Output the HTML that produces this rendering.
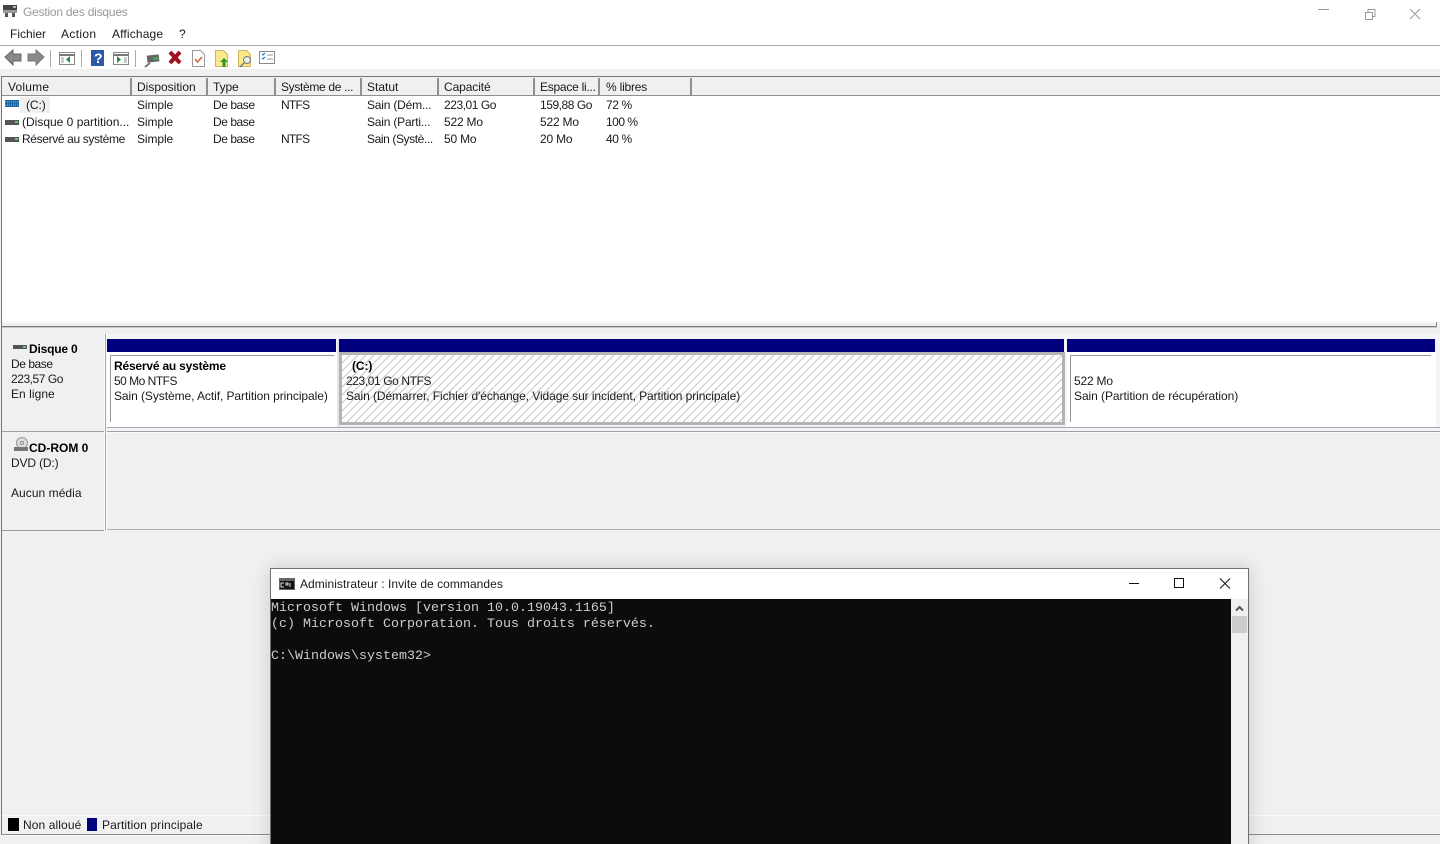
<!DOCTYPE html>
<html><head><meta charset="utf-8"><style>
html,body{margin:0;padding:0;width:1440px;height:844px;overflow:hidden;background:#f0f0f0}
#r{position:relative;width:1440px;height:844px;overflow:hidden;font:12px/16px "Liberation Sans",sans-serif;color:#1a1a1a}
#r div{position:absolute}
.t{white-space:nowrap;letter-spacing:-.1px}
.n{letter-spacing:-.45px}
.b{font-weight:bold;color:#000}
.h{top:78px;height:17px;background:#f0f0f0;border-right:2px solid #8f8f8f;box-sizing:border-box}
svg{position:absolute;overflow:visible}
.m{font-family:"Liberation Mono",monospace;font-size:13.33px;line-height:16px;color:#ccc;white-space:pre;left:271px}
</style></head><body><div id="r">
<div style="left:0;top:0;width:1440px;height:45px;background:#fff"></div>
<div style="left:0;top:45px;width:1440px;height:1px;background:#a8a8a8"></div>
<div style="left:0;top:46px;width:1440px;height:23px;background:#fff"></div>

<svg style="left:2px;top:4px" width="16" height="14"><rect x="1" y="1" width="14" height="5" fill="#444"/><rect x="11" y="2" width="3" height="2" fill="#9c9"/><path d="M1 6h14v3H1z" fill="#999"/><rect x="3" y="9" width="3" height="4" fill="#555"/><rect x="10" y="9" width="3" height="4" fill="#555"/></svg>
<div class="t" style="left:23px;top:4px;color:#999;letter-spacing:-.22px">Gestion des disques</div>
<svg style="left:1318px;top:9px" width="110" height="12" fill="none" stroke="#999"><path d="M0 .5h11M47.500 3.500h7v7h-7zM50 3V.5h7v7h-2.500M92 0l10 10M102 0l-10 10"/></svg>

<div class="t" style="left:10px;top:26px;letter-spacing:0">Fichier</div>
<div class="t" style="left:61px;top:26px;letter-spacing:.35px">Action</div>
<div class="t" style="left:112px;top:26px;letter-spacing:.15px">Affichage</div>
<div class="t" style="left:179px;top:26px">?</div>

<svg style="left:0;top:45px" width="290" height="24">
<path d="M5 12l8-7v4h8v7h-8v4z" fill="#8a8a8a" stroke="#666"/>
<path d="M44 12l-8-7v4h-8v7h8v4z" fill="#8a8a8a" stroke="#777"/>
<path d="M50.500 5v17M81.500 5v17M135.500 5v17" stroke="#aaa"/>
<rect x="59.500" y="7.500" width="15" height="12" fill="#fff" stroke="#888"/><path d="M60 10h14" stroke="#777" stroke-width="2"/><path d="M70 11v7l-4-3.500z" fill="#2a8a4a"/><path d="M61 13h3M61 15h3M61 17h3" stroke="#999"/>
<rect x="91" y="5" width="13" height="16" fill="#2c5aa8"/><text x="94" y="18" fill="#fff" font-size="14" font-weight="bold" font-family="Liberation Sans">?</text>
<rect x="113.500" y="7.500" width="15" height="12" fill="#fff" stroke="#888"/><path d="M114 10h14" stroke="#777" stroke-width="2"/><path d="M117 11v7l4-3.500z" fill="#2a8a4a"/><path d="M124 13h3M124 15h3M124 17h3" stroke="#999"/>
<path d="M145 22l5-4" stroke="#777" stroke-width="2"/><rect x="147" y="10" width="12" height="7" fill="#666" transform="rotate(-6 153 13)"/><rect x="153" y="12" width="5" height="3" fill="#4a4"/>
<path d="M170 7l10 11M180 7l-10 11" stroke="#a01020" stroke-width="4"/>
<path d="M192.500 5.500h8l4 4v12h-12z" fill="#fff" stroke="#999"/><path d="M195 14l2.500 3 4.500-5" stroke="#d06030" stroke-width="1.500" fill="none"/>
<path d="M215.500 5.500h8l4 4v12h-12z" fill="#fce98a" stroke="#c8b860"/><path d="M224 13l4 4h-2.500v5h-3v-5H220z" fill="#2a9a30"/>
<path d="M238.500 5.500h8l4 4v12h-12z" fill="#fce98a" stroke="#c8b860"/><circle cx="247" cy="15" r="3.500" fill="#e8eef0" stroke="#777"/><path d="M244 18l-4 4" stroke="#777" stroke-width="1.500"/>
<rect x="259.500" y="6.500" width="15" height="12" fill="#fff" stroke="#888"/><path d="M262 9l1 1 2-2M262 13l1 1 2-2" stroke="#2a6ab0" fill="none"/><path d="M267 10h6M267 14h6" stroke="#999"/>
</svg>

<!-- list box -->
<div style="left:1px;top:76px;width:1439px;height:1px;background:#777"></div>
<div style="left:2px;top:95px;width:1438px;height:226px;background:#fff"></div>
<div style="left:2px;top:94px;width:1438px;height:2px;background:#8f8f8f"></div>
<div style="left:1px;top:321px;width:1439px;height:2px;background:#f8f8f8"></div>
<div style="left:2px;top:326px;width:1435px;height:1px;background:#7a7a7a"></div>
<div style="left:2px;top:327px;width:1435px;height:1px;background:#c8c8c8"></div>
<div style="left:1436px;top:322px;width:1px;height:5px;background:#888"></div>

<div class="h" style="left:2px;width:130px"></div>
<div class="h" style="left:132px;width:76px"></div>
<div class="h" style="left:208px;width:68px"></div>
<div class="h" style="left:276px;width:86px"></div>
<div class="h" style="left:362px;width:77px"></div>
<div class="h" style="left:439px;width:96px"></div>
<div class="h" style="left:535px;width:65px"></div>
<div class="h" style="left:600px;width:92px"></div>
<div class="h" style="left:692px;width:748px;border:0"></div>

<div class="t" style="left:8px;top:79px;letter-spacing:.2px">Volume</div>
<div class="t" style="left:137px;top:79px;letter-spacing:0">Disposition</div>
<div class="t" style="left:213px;top:79px">Type</div>
<div class="t" style="left:281px;top:79px;letter-spacing:-.33px">Système de ...</div>
<div class="t" style="left:367px;top:79px;letter-spacing:0">Statut</div>
<div class="t" style="left:444px;top:79px;letter-spacing:-.1px">Capacité</div>
<div class="t" style="left:540px;top:79px;letter-spacing:-.25px">Espace li...</div>
<div class="t" style="left:606px;top:79px;letter-spacing:-.2px">% libres</div>

<div style="left:20px;top:97px;width:30px;height:16px;background:#f0f0f0"></div>
<svg style="left:5px;top:100px" width="14" height="8"><rect width="14" height="7" fill="#1f6aa8"/><path d="M0 2h14M0 5h14" stroke="#7cb0d8" stroke-dasharray="1 1"/></svg>
<svg style="left:5px;top:120px" width="14" height="5"><rect width="14" height="5" fill="#555"/><rect x="10" y="1" width="3" height="2" fill="#6c6"/></svg>
<svg style="left:5px;top:137px" width="14" height="5"><rect width="14" height="5" fill="#555"/><rect x="10" y="1" width="3" height="2" fill="#6c6"/></svg>

<div class="t" style="left:26px;top:97px">(C:)</div>
<div class="t" style="left:22px;top:114px;letter-spacing:0">(Disque 0 partition...</div>
<div class="t" style="left:22px;top:131px;letter-spacing:-.36px">Réservé au système</div>
<div class="t" style="left:137px;top:97px">Simple</div>
<div class="t" style="left:137px;top:114px">Simple</div>
<div class="t" style="left:137px;top:131px">Simple</div>
<div class="t n" style="left:213px;top:97px">De base</div>
<div class="t n" style="left:213px;top:114px">De base</div>
<div class="t n" style="left:213px;top:131px">De base</div>
<div class="t" style="left:281px;top:97px;letter-spacing:-.75px">NTFS</div>
<div class="t" style="left:281px;top:131px;letter-spacing:-.75px">NTFS</div>
<div class="t" style="left:367px;top:97px;letter-spacing:-.2px">Sain (Dém...</div>
<div class="t" style="left:367px;top:114px;letter-spacing:-.2px">Sain (Parti...</div>
<div class="t" style="left:367px;top:131px;letter-spacing:-.4px">Sain (Systè...</div>
<div class="t n" style="left:444px;top:97px">223,01 Go</div>
<div class="t" style="left:444px;top:114px;letter-spacing:-.2px">522 Mo</div>
<div class="t" style="left:444px;top:131px;letter-spacing:-.2px">50 Mo</div>
<div class="t n" style="left:540px;top:97px">159,88 Go</div>
<div class="t" style="left:540px;top:114px;letter-spacing:-.2px">522 Mo</div>
<div class="t" style="left:540px;top:131px;letter-spacing:-.2px">20 Mo</div>
<div class="t" style="left:606px;top:97px;letter-spacing:-.4px">72 %</div>
<div class="t" style="left:606px;top:114px;letter-spacing:-.5px">100 %</div>
<div class="t" style="left:606px;top:131px;letter-spacing:-.4px">40 %</div>

<!-- graphical area -->
<div style="left:1px;top:76px;width:1px;height:759px;background:#777"></div>
<div style="left:1px;top:834px;width:270px;height:1px;background:#8a8a8a"></div>
<div style="left:1px;top:835px;width:270px;height:1px;background:#fafafa"></div>
<div style="left:2px;top:815px;width:268px;height:1px;background:#fafafa"></div>
<div style="left:1249px;top:834px;width:191px;height:1px;background:#8a8a8a"></div>
<div style="left:1249px;top:815px;width:191px;height:1px;background:#fafafa"></div>

<div style="left:105px;top:334px;width:1335px;height:97px;background:#f4f4fb"></div>
<div style="left:105px;top:432px;width:1335px;height:97px;background:#f0f0f0"></div>
<div style="left:2px;top:431px;width:1438px;height:1px;background:#a0a0a0"></div>
<div style="left:105px;top:432px;width:1335px;height:1px;background:#fafafa"></div>
<div style="left:2px;top:530px;width:103px;height:1px;background:#999"></div>
<div style="left:105px;top:529px;width:1335px;height:1px;background:#b0b0b0"></div>
<div style="left:104px;top:334px;width:1px;height:197px;background:#fafafa"></div>
<div style="left:105px;top:334px;width:1px;height:196px;background:#a8a8a8"></div>
<div style="left:106px;top:334px;width:1px;height:196px;background:#fafafa"></div>

<svg style="left:13px;top:345px" width="15" height="5"><rect width="14" height="4" fill="#555"/><rect x="10" y="1" width="3" height="2" fill="#6c6"/></svg>
<div class="t b" style="left:29px;top:341px;letter-spacing:-.2px">Disque 0</div>
<div class="t n" style="left:11px;top:356px">De base</div>
<div class="t n" style="left:11px;top:371px">223,57 Go</div>
<div class="t" style="left:11px;top:386px;letter-spacing:.05px">En ligne</div>

<svg style="left:14px;top:437px" width="15" height="15"><circle cx="8" cy="6" r="5.500" fill="#ddd" stroke="#999"/><circle cx="8" cy="6" r="1.500" fill="#fff" stroke="#888"/><rect y="10" width="14" height="4" fill="#777"/></svg>
<div class="t b" style="left:29px;top:440px;letter-spacing:0">CD-ROM 0</div>
<div class="t" style="left:11px;top:455px;letter-spacing:-.15px">DVD (D:)</div>
<div class="t" style="left:11px;top:485px;letter-spacing:.05px">Aucun média</div>

<!-- partitions -->
<div style="left:107px;top:339px;width:229px;height:13px;background:#00007f"></div>
<div style="left:339px;top:339px;width:725px;height:13px;background:#00007f"></div>
<div style="left:1067px;top:339px;width:368px;height:13px;background:#00007f"></div>

<div style="left:107px;top:352px;width:230px;height:75px;background:#fff"></div>
<div style="left:110px;top:355px;width:224px;height:1px;background:#999"></div>
<div style="left:110px;top:355px;width:1px;height:67px;background:#999"></div>
<div style="left:1067px;top:352px;width:369px;height:75px;background:#fff"></div>
<div style="left:1070px;top:355px;width:361px;height:1px;background:#999"></div>
<div style="left:1070px;top:355px;width:1px;height:67px;background:#999"></div>
<div style="left:107px;top:427px;width:1333px;height:1px;background:#a8a8a8"></div>

<div style="left:337px;top:339px;width:2px;height:88px;background:#e6e6e6"></div>
<div style="left:339px;top:352px;width:726px;height:73px;background:#b4b4b4"></div>
<svg style="left:342px;top:355px" width="720" height="67"><defs><pattern id="p" width="8" height="8" patternUnits="userSpaceOnUse"><path d="M-1 9L9-1" stroke="#c2c2c2" stroke-width="1"/></pattern></defs><rect width="720" height="67" fill="#fff"/><rect width="720" height="67" fill="url(#p)"/></svg>
<div style="left:339px;top:425px;width:726px;height:2px;background:#efefef"></div>

<div class="t b" style="left:114px;top:358px;letter-spacing:-.2px">Réservé au système</div>
<div class="t" style="left:114px;top:373px;letter-spacing:-.5px">50 Mo NTFS</div>
<div class="t" style="left:114px;top:388px;letter-spacing:-.07px">Sain (Système, Actif, Partition principale)</div>
<div class="t b" style="left:352px;top:358px">(C:)</div>
<div class="t" style="left:346px;top:373px;letter-spacing:-.4px">223,01 Go NTFS</div>
<div class="t" style="left:346px;top:388px;letter-spacing:-.08px">Sain (Démarrer, Fichier d'échange, Vidage sur incident, Partition principale)</div>
<div class="t" style="left:1074px;top:373px;letter-spacing:-.2px">522 Mo</div>
<div class="t" style="left:1074px;top:388px;letter-spacing:-.06px">Sain (Partition de récupération)</div>

<!-- legend -->
<div style="left:8px;top:818px;width:11px;height:13px;background:#000"></div>
<div class="t" style="left:23px;top:817px;letter-spacing:.1px">Non alloué</div>
<div style="left:87px;top:818px;width:10px;height:13px;background:#00007f"></div>
<div class="t" style="left:102px;top:817px;letter-spacing:.1px">Partition principale</div>

<!-- console -->
<div style="left:270px;top:568px;width:979px;height:290px;background:#fff;border:1px solid #707070;box-sizing:border-box;box-shadow:0 0 18px rgba(0,0,0,.16)"></div>
<svg style="left:279px;top:578px" width="16" height="12"><rect width="16" height="12" fill="#666"/><rect x="1" y="3" width="14" height="8" fill="#111"/><path d="M5 5H2v4h3M7 5h2v2H7zM11 5v4" stroke="#ddd" fill="none"/></svg>
<div class="t" style="left:300px;top:576px;letter-spacing:.04px">Administrateur : Invite de commandes</div>
<svg style="left:1129px;top:578px" width="102" height="12" fill="none" stroke="#111"><path d="M0 5.500h10M45.500 .5h9v9h-9zM91 .5l10 10M101 .5l-10 10"/></svg>
<div style="left:271px;top:599px;width:960px;height:245px;background:#0c0c0c"></div>
<div style="left:1231px;top:599px;width:17px;height:245px;background:#f0f0f0"></div>
<div style="left:1232px;top:616px;width:15px;height:17px;background:#cdcdcd"></div>
<svg style="left:1235px;top:605px" width="9" height="7" fill="none" stroke="#555" stroke-width="2"><path d="M1 5.500l3.500-3.500 3.500 3.500"/></svg>
<div class="m" style="top:601px">Microsoft Windows [version 10.0.19043.1165]</div>
<div class="m" style="top:617px">(c) Microsoft Corporation. Tous droits réservés.</div>
<div class="m" style="top:649px">C:\Windows\system32&gt;</div>
</div></body></html>
